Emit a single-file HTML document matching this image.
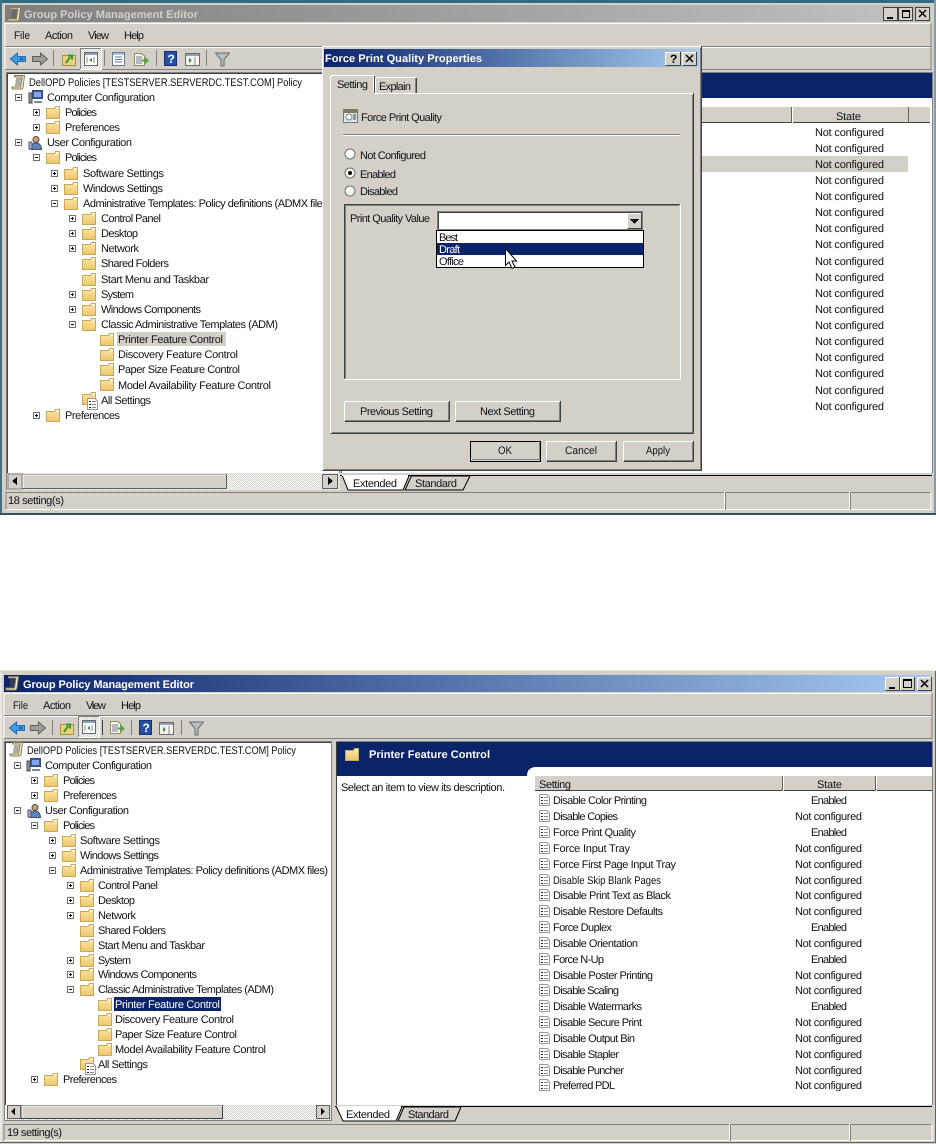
<!DOCTYPE html>
<html><head><meta charset="utf-8"><title>Group Policy Management Editor</title>
<style>
html,body{margin:0;padding:0;background:#fff;width:936px;height:1144px;overflow:hidden}
svg{display:block}
text{font-family:"Liberation Sans",sans-serif;font-size:11px;fill:#101018;text-rendering:geometricPrecision}
.b{font-weight:bold}
.w{fill:#fff}
</style></head><body>
<svg width="936" height="1144" viewBox="0 0 936 1144" xmlns="http://www.w3.org/2000/svg" shape-rendering="crispEdges">
<defs>
<linearGradient id="ina"><stop offset="0" stop-color="#7f7f7f"/><stop offset="1" stop-color="#c2c2c0"/></linearGradient>
<linearGradient id="act"><stop offset="0" stop-color="#0a246a"/><stop offset="1" stop-color="#a6caf0"/></linearGradient>
<linearGradient id="fg" x1="0" y1="0" x2="0" y2="1"><stop offset="0" stop-color="#fbe7a8"/><stop offset="1" stop-color="#eec56a"/></linearGradient>
<pattern id="dith" width="2" height="2" patternUnits="userSpaceOnUse"><rect width="2" height="2" fill="#fff"/><rect width="1" height="1" fill="#d4d0c8"/><rect x="1" y="1" width="1" height="1" fill="#d4d0c8"/></pattern>
<symbol id="f" width="14" height="13" viewBox="0 0 14 13"><path shape-rendering="auto" d="M.5 2.500H8.500L9.500 .5H13.500V12.500H.5Z" fill="url(#fg)" stroke="#c4a85c"/><path d="M10 1.500h3v1h-3z" fill="#fff"/></symbol>
<symbol id="p" width="7" height="7" viewBox="0 0 7 7"><rect x=".5" y=".5" width="6" height="6" fill="#fff" stroke="#707070"/><path d="M2 3.500h3M3.500 2v3" stroke="#000" fill="none"/></symbol>
<symbol id="m" width="7" height="7" viewBox="0 0 7 7"><rect x=".5" y=".5" width="6" height="6" fill="#fff" stroke="#707070"/><path d="M2 3.500h3" stroke="#000" fill="none"/></symbol>
<symbol id="d" width="11" height="12" viewBox="0 0 11 12"><path d="M.5 .5H8L10.500 3V11.500H.5Z" fill="#fff" stroke="#9a9a9a"/><path d="M2 3h2v1H2zM2 6h2v1H2zM2 9h2v1H2z" fill="#222"/><path d="M5 3h4v1H5zM5 6h4v1H5zM5 9h4v1H5z" fill="#8a8a9a"/></symbol>
<symbol id="scroll" width="15" height="16" viewBox="0 0 15 16"><path shape-rendering="auto" d="M3.500 1.500H13.500L12 13.500Q11.500 15 10 15H1.500Q.5 14.500 1 13H9.500L11 3H3.500Z" fill="#f6ecc8" stroke="#8a7a50"/><path d="M5 5h5M4.500 7h5M4.300 9h5M4 11h5" stroke="#555" fill="none"/></symbol>
<symbol id="pc" width="15" height="14" viewBox="0 0 15 14"><rect x="4.500" y=".5" width="10" height="8" fill="#2a5fc0" stroke="#404a60"/><rect x="6" y="2" width="7" height="5" fill="#7ea8e8"/><rect x="1" y="3" width="3" height="10" fill="#8896a8" stroke="#445"/><path d="M6 11h8v2H6z" fill="#7a8a9a"/></symbol>
<symbol id="usr" width="14" height="14" viewBox="0 0 14 14"><circle shape-rendering="auto" cx="8" cy="3.500" r="3" fill="#caa27a" stroke="#5a4634"/><path shape-rendering="auto" d="M3 13.500Q3 7 8 7T13.500 13.500Z" fill="#5d84b4" stroke="#3a5070"/><rect x="1" y="6" width="3" height="7" fill="#a0b4d0" stroke="#557"/></symbol>
<symbol id="back" width="16" height="14" viewBox="0 0 16 14"><path shape-rendering="auto" d="M.5 7L7.500 1V4.500H15.500V9.500H7.500V13Z" fill="#3c9ae0" stroke="#2468b0"/><path d="M10 6h3v2h-3z" fill="#1a5ab0"/></symbol>
<symbol id="fwd" width="16" height="14" viewBox="0 0 16 14"><path shape-rendering="auto" d="M15.500 7L8.500 1V4.500H.5V9.500H8.500V13Z" fill="#9c9c98" stroke="#5e5e5a"/></symbol>
<symbol id="up" width="14" height="14" viewBox="0 0 14 14"><rect x=".5" y="3.500" width="13" height="10" fill="#efcf78" stroke="#a98e48"/><path shape-rendering="auto" d="M4 11L8 5M6 3.500H10V7.500" stroke="#2e9a3a" stroke-width="2" fill="none"/></symbol>
<symbol id="tree" width="22" height="22" viewBox="0 0 22 22"><rect width="22" height="22" fill="url(#dith)"/><path d="M.5 21.500V.5H21.500" stroke="#808080" fill="none"/><path d="M21.500 0V21.500H0" stroke="#fff" fill="none"/><rect x="4.500" y="4.500" width="13" height="13" fill="#fff" stroke="#6a6a6a"/><rect x="5" y="5" width="12" height="2" fill="#8aa0c0"/><path d="M7 9v6M14 9v6" stroke="#888"/><path d="M12 10v4l-3-2z" fill="#2e9a3a"/></symbol>
<symbol id="help" width="13" height="15" viewBox="0 0 13 15"><rect x=".5" y=".5" width="12" height="14" fill="#2450a8" stroke="#18306c"/><text x="3.500" y="12" class="w b" style="font-size:12px">?</text></symbol>
<symbol id="view" width="15" height="13" viewBox="0 0 15 13"><rect x=".5" y=".5" width="14" height="12" fill="#f4f4f0" stroke="#6a6a6a"/><rect x="1" y="1" width="13" height="2" fill="#8aa0c0"/><path d="M10 4v8" stroke="#888"/><path d="M4 5v5l3-2.500z" fill="#2e9a3a"/></symbol>
<symbol id="filt" width="15" height="15" viewBox="0 0 15 15"><path shape-rendering="auto" d="M.5 1H14.500L9 7.500V14H6V7.500Z" fill="#b8c0c4" stroke="#606a70"/></symbol>
<symbol id="exp" width="15" height="13" viewBox="0 0 15 13"><path d="M.5 .5H7.500L10.500 3V12.500H.5Z" fill="#fbf6e0" stroke="#8a8a70"/><path d="M2 4h6M2 6h6M2 8h6M2 10h6" stroke="#77a" fill="none"/><path shape-rendering="auto" d="M8 6.500h3V4l4 3.500-4 3.500V8.500H8Z" fill="#4caa3c"/></symbol>
<symbol id="doc2" width="13" height="14" viewBox="0 0 13 14"><rect x=".5" y=".5" width="12" height="13" fill="#fff" stroke="#6a7a8a"/><rect x="1" y="1" width="11" height="2" fill="#a8c0d8"/><path d="M3 5h7M3 7.500h7M3 10h7" stroke="#5a70a8" fill="none"/></symbol>
</defs>

<!-- ================= WINDOW 1 ================= -->
<rect x="0" y="0" width="936" height="514" fill="#d4d0c8"/>
<rect x="0" y="0" width="936" height="3" fill="#2f6c84"/>
<rect x="0" y="0" width="2" height="514" fill="#3d7287"/>
<rect x="934" y="0" width="2" height="514" fill="#8b9aa0"/>
<rect x="0" y="513" width="936" height="2" fill="#2d5260"/>
<rect x="5" y="5" width="926" height="17" fill="url(#ina)"/>
<use href="#scroll" x="7" y="6"/>
<text x="24" y="18" class="b" style="fill:#d4d0c8" textLength="174">Group Policy Management Editor</text>
<g fill="#d4d0c8" stroke="#404040"><rect x="883.500" y="7.500" width="14" height="13"/><rect x="898.500" y="7.500" width="14" height="13"/><rect x="915.500" y="7.500" width="14" height="13"/></g>
<rect x="887" y="17" width="6" height="2" fill="#000"/><rect x="902.500" y="10.500" width="7" height="7" fill="none" stroke="#000"/><path d="M902 11.500h8" stroke="#000"/>
<path d="M919 10l7 7M926 10l-7 7" stroke="#000" stroke-width="1.500" shape-rendering="auto"/>
<path d="M5 46.500V23.500H931" stroke="#fff" fill="none"/><path d="M5 46.500H931V23" stroke="#808080" fill="none"/>
<text x="14" y="39" textLength="16" lengthAdjust="spacingAndGlyphs">File</text><text x="45" y="39" textLength="28">Action</text><text x="88" y="39" textLength="21">View</text><text x="124" y="39" textLength="20">Help</text>
<path d="M5 69.500V47.500H931" stroke="#fff" fill="none"/><path d="M5 69.500H931V47" stroke="#808080" fill="none"/>
<use href="#back" x="10" y="52"/><use href="#fwd" x="32" y="52"/>
<path d="M53.500 50v16M104.500 50v16M156.500 50v16M206.500 50v16" stroke="#808080"/>
<use href="#up" x="62" y="52"/><use href="#tree" x="80" y="48"/><use href="#doc2" x="112" y="52"/><use href="#exp" x="134" y="53"/><use href="#help" x="164" y="51"/><use href="#view" x="185" y="53"/><use href="#filt" x="215" y="52"/>
<!-- tree pane -->
<rect x="6.500" y="72.500" width="333" height="417" fill="#fff" stroke="#808080"/>
<path d="M7.500 473V73.500H338" stroke="#404040" fill="none"/>
<use href="#scroll" x="11" y="74"/><text x="29" y="86" textLength="273" lengthAdjust="spacingAndGlyphs">DellOPD Policies [TESTSERVER.SERVERDC.TEST.COM] Policy</text>
<use href="#m" x="15" y="94"/><use href="#pc" x="28" y="90"/><text x="47" y="101" textLength="108">Computer Configuration</text>
<use href="#p" x="33" y="109"/><use href="#f" x="46" y="106"/><text x="65" y="116" textLength="32">Policies</text>
<use href="#p" x="33" y="124"/><use href="#f" x="46" y="121"/><text x="65" y="131" textLength="55">Preferences</text>
<use href="#m" x="15" y="139"/><use href="#usr" x="28" y="136"/><text x="47" y="146" textLength="85">User Configuration</text>
<use href="#m" x="33" y="154"/><use href="#f" x="46" y="151"/><text x="65" y="161" textLength="32">Policies</text>
<use href="#p" x="51" y="170"/><use href="#f" x="64" y="167"/><text x="83" y="177" textLength="81">Software Settings</text>
<use href="#p" x="51" y="185"/><use href="#f" x="64" y="182"/><text x="83" y="192" textLength="80">Windows Settings</text>
<use href="#m" x="51" y="200"/><use href="#f" x="64" y="197"/><text x="83" y="207" textLength="248">Administrative Templates: Policy definitions (ADMX files)</text>
<use href="#p" x="69" y="215"/><use href="#f" x="82" y="212"/><text x="101" y="222" textLength="60">Control Panel</text>
<use href="#p" x="69" y="230"/><use href="#f" x="82" y="227"/><text x="101" y="237" textLength="37">Desktop</text>
<use href="#p" x="69" y="245"/><use href="#f" x="82" y="242"/><text x="101" y="252" textLength="38">Network</text>
<use href="#f" x="82" y="257"/><text x="101" y="267" textLength="68">Shared Folders</text>
<use href="#f" x="82" y="273"/><text x="101" y="283" textLength="108">Start Menu and Taskbar</text>
<use href="#p" x="69" y="291"/><use href="#f" x="82" y="288"/><text x="101" y="298" textLength="33">System</text>
<use href="#p" x="69" y="306"/><use href="#f" x="82" y="303"/><text x="101" y="313" textLength="100">Windows Components</text>
<use href="#m" x="69" y="321"/><use href="#f" x="82" y="318"/><text x="101" y="328" textLength="177">Classic Administrative Templates (ADM)</text>
<rect x="117" y="332" width="109" height="14" fill="#d4d0c8"/>
<use href="#f" x="100" y="333"/><text x="118" y="343" textLength="105">Printer Feature Control</text>
<use href="#f" x="100" y="348"/><text x="118" y="358" textLength="120">Discovery Feature Control</text>
<use href="#f" x="100" y="363"/><text x="118" y="373" textLength="122">Paper Size Feature Control</text>
<use href="#f" x="100" y="378"/><text x="118" y="389" textLength="153">Model Availability Feature Control</text>
<use href="#f" x="82" y="392"/><use href="#d" x="87" y="398"/><text x="101" y="404" textLength="50">All Settings</text>
<use href="#p" x="33" y="412"/><use href="#f" x="46" y="409"/><text x="65" y="419" textLength="55">Preferences</text>
<!-- tree scrollbar -->
<rect x="7" y="473" width="333" height="17" fill="url(#dith)"/>
<rect x="8" y="474" width="14" height="15" fill="#d4d0c8" stroke="#808080"/><path d="M17 477v8l-5-4z" fill="#000"/>
<rect x="22.500" y="474.500" width="204" height="14" fill="#d4d0c8" stroke="#606060"/><path d="M23 488V475H226" stroke="#fff" fill="none"/>
<rect x="322.500" y="474.500" width="15" height="14" fill="#d4d0c8" stroke="#606060"/><path d="M328 477v8l5-4z" fill="#000"/>
<!-- right pane -->
<rect x="341.500" y="72.500" width="591" height="403" fill="#fff" stroke="#808080"/>
<rect x="342" y="73" width="590" height="25" fill="#0a246a"/>
<rect x="700" y="107" width="230" height="16" fill="#d4d0c8"/><path d="M700 122.500H930" stroke="#404040"/><path d="M791.500 107v16M908.500 107v16" stroke="#606060"/><path d="M792.500 107v16" stroke="#fff"/>
<text x="836" y="120" textLength="25">State</text>
<rect x="700" y="156" width="208" height="16" fill="#d4d0c8"/>
<g><text x="815" y="136" textLength="69">Not configured</text><text x="815" y="152" textLength="69">Not configured</text><text x="815" y="168" textLength="69">Not configured</text><text x="815" y="184" textLength="69">Not configured</text><text x="815" y="200" textLength="69">Not configured</text><text x="815" y="216" textLength="69">Not configured</text><text x="815" y="232" textLength="69">Not configured</text><text x="815" y="248" textLength="69">Not configured</text><text x="815" y="265" textLength="69">Not configured</text><text x="815" y="281" textLength="69">Not configured</text><text x="815" y="297" textLength="69">Not configured</text><text x="815" y="313" textLength="69">Not configured</text><text x="815" y="329" textLength="69">Not configured</text><text x="815" y="345" textLength="69">Not configured</text><text x="815" y="361" textLength="69">Not configured</text><text x="815" y="377" textLength="69">Not configured</text><text x="815" y="394" textLength="69">Not configured</text><text x="815" y="410" textLength="69">Not configured</text></g>
<!-- bottom tabs -->
<rect x="340" y="473" width="593" height="18" fill="#d4d0c8"/>
<path d="M340 475.500H932" stroke="#000"/>
<path shape-rendering="auto" d="M342 475L348 490H403L409 476" fill="#fff" stroke="#000"/>
<path shape-rendering="auto" d="M405 490L411 477V476H470L463 490Z" fill="#d4d0c8" stroke="#000"/><path d="M342 475.500H408" stroke="#fff"/>
<text x="353" y="487" textLength="44">Extended</text><text x="415" y="487" textLength="42">Standard</text>
<!-- status -->
<path d="M6 509.500V492.500H931" stroke="#808080" fill="none"/><path d="M6 509.500H931V492" stroke="#fff" fill="none"/>
<path d="M724.500 492v18M849.500 492v18" stroke="#fff"/><path d="M725.500 492v18M850.500 492v18" stroke="#808080"/>
<text x="8" y="504" textLength="56">18 setting(s)</text>

<!-- dialog -->
<rect x="322" y="46" width="380" height="425" fill="#d4d0c8"/>
<path d="M322.500 471V46.500H701" stroke="#fff" fill="none"/><path d="M322.500 470.500H701.500V46" stroke="#404040" fill="none"/><path d="M324 469.500H700.500V48" stroke="#808080" fill="none"/>
<rect x="324" y="49" width="375" height="18" fill="url(#act)"/>
<text x="325" y="62" class="b w" textLength="157">Force Print Quality Properties</text>
<rect x="665" y="52" width="16" height="14" fill="#d4d0c8"/><path d="M665.500 66V52.500H681" stroke="#fff" fill="none"/><path d="M665.500 65.500H680.500V52" stroke="#404040" fill="none"/><text x="670" y="63" class="b" style="font-size:12px;fill:#000">?</text>
<rect x="682" y="52" width="15" height="14" fill="#d4d0c8"/><path d="M682.500 66V52.500H697" stroke="#fff" fill="none"/><path d="M682.500 65.500H696.500V52" stroke="#404040" fill="none"/><path d="M686 55l7 7M693 55l-7 7" stroke="#000" stroke-width="1.500" shape-rendering="auto"/>
<!-- tab panel -->
<path d="M330.500 433V93.500H693" stroke="#fff" fill="none"/><path d="M330.500 433.500H693.500V93" stroke="#404040" fill="none"/><path d="M332 432.500H692.500V95" stroke="#808080" fill="none"/>
<path d="M375.500 93V78.500L377 77.500H415.500V93" fill="#d4d0c8" stroke="#fff"/><path d="M416.500 78V93" stroke="#404040"/><path d="M415.500 78V93" stroke="#808080"/>
<path d="M330.500 94V76.500L332 75.500H373.500V94" fill="#d4d0c8" stroke="#fff"/><rect x="331" y="92" width="43" height="3" fill="#d4d0c8"/><path d="M374.500 76V93" stroke="#404040"/>
<text x="337" y="88" textLength="31">Setting</text><text x="379" y="90" textLength="32">Explain</text>
<rect x="343.500" y="109.500" width="14" height="13" fill="#dfe6ec" stroke="#6a7a80"/><rect x="344" y="110" width="13" height="3" fill="#8a7a4a"/><circle shape-rendering="auto" cx="349" cy="117" r="3" fill="#fff" stroke="#6a8aa0"/><path d="M353 115h3M353 117h3M353 119h3" stroke="#444"/>
<text x="361" y="121" textLength="81">Force Print Quality</text>
<path d="M343 134.500H680" stroke="#808080"/><path d="M343 135.500H680" stroke="#fff"/>
<g shape-rendering="auto">
<circle cx="350" cy="154" r="5" fill="#fff" stroke="#707070"/>
<circle cx="350" cy="173" r="5" fill="#fff" stroke="#707070"/><circle cx="350" cy="173" r="2" fill="#000"/>
<circle cx="350" cy="191" r="5" fill="#fff" stroke="#707070"/>
</g>
<text x="360" y="159" textLength="66">Not Configured</text><text x="360" y="178" textLength="36">Enabled</text><text x="360" y="195" textLength="38">Disabled</text>
<path d="M344.500 379V204.500H680" stroke="#404040" fill="none"/><path d="M345.500 378V205.500H679" stroke="#808080" fill="none"/><path d="M344 379.500H680.500V204" stroke="#fff" fill="none"/>
<text x="350" y="222" textLength="80">Print Quality Value</text>
<rect x="437.500" y="211.500" width="205" height="18" fill="#fff" stroke="#808080"/><path d="M438.500 229V212.500H642" stroke="#404040" fill="none"/>
<rect x="627" y="213" width="15" height="16" fill="#d4d0c8"/><path d="M627.500 229V213.500H642" stroke="#fff" fill="none"/><path d="M627.500 228.500H641.500V213" stroke="#404040" fill="none"/><path d="M630 219h9l-4.500 5z" fill="#000"/>
<rect x="436.500" y="230.500" width="207" height="37" fill="#fff" stroke="#000"/>
<rect x="437" y="243" width="206" height="12" fill="#0a246a"/>
<text x="439" y="241" textLength="19">Best</text><text x="439" y="253" class="w" textLength="21">Draft</text><text x="439" y="265" textLength="25">Office</text>
<path shape-rendering="auto" d="M505.500 248.500V265.500L509 262L512 268.500L515 267L512 261H516.500Z" fill="#fff" stroke="#000"/>
<g fill="#d4d0c8">
<rect x="344" y="401" width="106" height="21"/><rect x="455" y="401" width="106" height="21"/><rect x="470" y="441" width="71" height="21"/><rect x="546" y="441" width="71" height="21"/><rect x="623" y="441" width="71" height="21"/></g>
<path d="M344.500 422V401.500H450M455.500 422V401.500H561M546.500 462V441.500H617M623.500 462V441.500H694" stroke="#fff" fill="none"/>
<path d="M344.500 421.500H449.500V401M455.500 421.500H560.500V401M546.500 461.500H616.500V441M623.500 461.500H693.500V441" stroke="#404040" fill="none"/>
<path d="M345 420.500H448.500V402M456 420.500H559.500V402M547 460.500H615.500V442M624 460.500H692.500V442" stroke="#808080" fill="none"/>
<rect x="470.500" y="441.500" width="70" height="20" fill="none" stroke="#000"/><path d="M472 459.500H539.500V443" stroke="#808080" fill="none"/>
<text x="360" y="415" textLength="73">Previous Setting</text><text x="480" y="415" textLength="55">Next Setting</text><text x="498" y="454" textLength="14" lengthAdjust="spacingAndGlyphs">OK</text><text x="565" y="454" textLength="32" lengthAdjust="spacingAndGlyphs">Cancel</text><text x="646" y="454" textLength="24" lengthAdjust="spacingAndGlyphs">Apply</text>

<!-- ================= WINDOW 2 ================= -->
<rect x="0" y="671" width="936" height="473" fill="#d4d0c8"/>
<path d="M0 670.500H936" stroke="#e8e6e0"/><path d="M1 672V1143" stroke="#fff"/><path d="M0 1142.500H936M935.500 671V1143" stroke="#606060"/>
<rect x="4" y="675" width="928" height="17" fill="url(#act)"/>
<use href="#scroll" x="5" y="675"/>
<text x="23" y="688" class="b w" textLength="171">Group Policy Management Editor</text>
<g fill="#d4d0c8"><rect x="885" y="677" width="15" height="14"/><rect x="900" y="677" width="15" height="14"/><rect x="917" y="677" width="15" height="14"/></g>
<path d="M885.500 691V677.500H900M900.500 691V677.500H915M917.500 691V677.500H932" stroke="#fff" fill="none"/>
<path d="M885.500 690.500H899.500V677M900.500 690.500H914.500V677M917.500 690.500H931.500V677" stroke="#404040" fill="none"/>
<rect x="889" y="687" width="6" height="2" fill="#000"/><rect x="903.500" y="679.500" width="8" height="8" fill="none" stroke="#000"/><path d="M904 680.500h7" stroke="#000"/>
<path d="M921 680l7 7M928 680l-7 7" stroke="#000" stroke-width="1.500" shape-rendering="auto"/>
<path d="M4 715.500V693.500H932" stroke="#fff" fill="none"/><path d="M4 715.500H932V693" stroke="#808080" fill="none"/>
<text x="13" y="709" textLength="15" lengthAdjust="spacingAndGlyphs">File</text><text x="43" y="709" textLength="28">Action</text><text x="86" y="709" textLength="20">View</text><text x="121" y="709" textLength="20">Help</text>
<path d="M4 738.500V716.500H932" stroke="#fff" fill="none"/><path d="M4 738.500H932V716" stroke="#808080" fill="none"/>
<use href="#back" x="9" y="721"/><use href="#fwd" x="30" y="721"/>
<path d="M52.500 720v15M131.500 720v15M181.500 720v15" stroke="#808080"/><path d="M102.500 720v15" stroke="#404040"/>
<use href="#up" x="60" y="721"/><use href="#tree" x="78" y="716"/><use href="#exp" x="110" y="721"/><use href="#help" x="139" y="720"/><use href="#view" x="159" y="722"/><use href="#filt" x="189" y="721"/>
<!-- tree pane -->
<rect x="4.500" y="741.500" width="327" height="379" fill="#fff" stroke="#808080"/>
<path d="M5.500 1105V742.500H331" stroke="#404040" fill="none"/>
<use href="#scroll" x="9" y="741"/><text x="27" y="754" textLength="269" lengthAdjust="spacingAndGlyphs">DellOPD Policies [TESTSERVER.SERVERDC.TEST.COM] Policy</text>
<use href="#m" x="14" y="762"/><use href="#pc" x="26" y="758"/><text x="45" y="769" textLength="107">Computer Configuration</text>
<use href="#p" x="31" y="777"/><use href="#f" x="44" y="774"/><text x="63" y="784" textLength="32">Policies</text>
<use href="#p" x="31" y="792"/><use href="#f" x="44" y="789"/><text x="63" y="799" textLength="54">Preferences</text>
<use href="#m" x="14" y="807"/><use href="#usr" x="27" y="804"/><text x="45" y="814" textLength="84">User Configuration</text>
<use href="#m" x="31" y="822"/><use href="#f" x="44" y="819"/><text x="63" y="829" textLength="32">Policies</text>
<use href="#p" x="49" y="837"/><use href="#f" x="62" y="834"/><text x="80" y="844" textLength="80">Software Settings</text>
<use href="#p" x="49" y="852"/><use href="#f" x="62" y="849"/><text x="80" y="859" textLength="79">Windows Settings</text>
<use href="#m" x="49" y="867"/><use href="#f" x="62" y="864"/><text x="80" y="874" textLength="248">Administrative Templates: Policy definitions (ADMX files)</text>
<use href="#p" x="67" y="882"/><use href="#f" x="80" y="879"/><text x="98" y="889" textLength="60">Control Panel</text>
<use href="#p" x="67" y="897"/><use href="#f" x="80" y="894"/><text x="98" y="904" textLength="37">Desktop</text>
<use href="#p" x="67" y="912"/><use href="#f" x="80" y="909"/><text x="98" y="919" textLength="38">Network</text>
<use href="#f" x="80" y="924"/><text x="98" y="934" textLength="68">Shared Folders</text>
<use href="#f" x="80" y="939"/><text x="98" y="949" textLength="107">Start Menu and Taskbar</text>
<use href="#p" x="67" y="957"/><use href="#f" x="80" y="954"/><text x="98" y="964" textLength="33">System</text>
<use href="#p" x="67" y="971"/><use href="#f" x="80" y="968"/><text x="98" y="978" textLength="99">Windows Components</text>
<use href="#m" x="67" y="986"/><use href="#f" x="80" y="983"/><text x="98" y="993" textLength="176">Classic Administrative Templates (ADM)</text>
<rect x="114" y="997" width="107" height="14" fill="#0a246a"/>
<use href="#f" x="98" y="998"/><text x="115" y="1008" class="w" textLength="105">Printer Feature Control</text>
<use href="#f" x="98" y="1013"/><text x="115" y="1023" textLength="119">Discovery Feature Control</text>
<use href="#f" x="98" y="1028"/><text x="115" y="1038" textLength="122">Paper Size Feature Control</text>
<use href="#f" x="98" y="1043"/><text x="115" y="1053" textLength="151">Model Availability Feature Control</text>
<use href="#f" x="80" y="1057"/><use href="#d" x="85" y="1063"/><text x="98" y="1068" textLength="50">All Settings</text>
<use href="#p" x="31" y="1076"/><use href="#f" x="44" y="1073"/><text x="63" y="1083" textLength="54">Preferences</text>
<!-- scrollbar -->
<rect x="6" y="1105" width="325" height="15" fill="url(#dith)"/>
<rect x="7.500" y="1105.500" width="13" height="13" fill="#d4d0c8" stroke="#606060"/><path d="M15 1108v7l-4-3.500z" fill="#000"/>
<rect x="21.500" y="1105.500" width="201" height="13" fill="#d4d0c8" stroke="#404040"/><path d="M22 1118V1106H222" stroke="#fff" fill="none"/>
<rect x="316.500" y="1105.500" width="13" height="13" fill="#d4d0c8" stroke="#606060"/><path d="M321 1108v7l4-3.500z" fill="#000"/>
<!-- right pane -->
<rect x="336.500" y="741.500" width="596" height="364" fill="#fff" stroke="#808080"/>
<path d="M336.500 1105V742" stroke="#404040"/>
<rect x="337" y="742" width="595" height="25" fill="#0a246a"/><rect x="337" y="767" width="190" height="9" fill="#0a246a"/>
<path shape-rendering="auto" d="M527 776Q527 768 535 767L527 767Z" fill="#0a246a"/>
<use href="#f" x="345" y="748"/><text x="369" y="758" class="b w" textLength="121">Printer Feature Control</text>
<text x="341" y="791" textLength="164">Select an item to view its description.</text>
<rect x="535" y="776" width="397" height="15" fill="#d4d0c8"/><path d="M535 790.500H932" stroke="#404040"/><path d="M782.500 776v15M875.500 776v15" stroke="#606060"/><path d="M783.500 776v15M876.500 776v15" stroke="#fff"/>
<text x="539" y="788" textLength="32">Setting</text><text x="817" y="788" textLength="25">State</text>
<use href="#d" x="539" y="794"/><text x="553" y="804" textLength="94">Disable Color Printing</text><text x="811" y="804" textLength="36">Enabled</text>
<use href="#d" x="539" y="810"/><text x="553" y="820" textLength="65">Disable Copies</text><text x="795" y="820" textLength="67">Not configured</text>
<use href="#d" x="539" y="826"/><text x="553" y="836" textLength="83">Force Print Quality</text><text x="811" y="836" textLength="36">Enabled</text>
<use href="#d" x="539" y="842"/><text x="553" y="852" textLength="77">Force Input Tray</text><text x="795" y="852" textLength="67">Not configured</text>
<use href="#d" x="539" y="858"/><text x="553" y="868" textLength="123">Force First Page Input Tray</text><text x="795" y="868" textLength="67">Not configured</text>
<use href="#d" x="539" y="874"/><text x="553" y="884" textLength="108" lengthAdjust="spacingAndGlyphs">Disable Skip Blank Pages</text><text x="795" y="884" textLength="67">Not configured</text>
<use href="#d" x="539" y="889"/><text x="553" y="899" textLength="118">Disable Print Text as Black</text><text x="795" y="899" textLength="67">Not configured</text>
<use href="#d" x="539" y="905"/><text x="553" y="915" textLength="110">Disable Restore Defaults</text><text x="795" y="915" textLength="67">Not configured</text>
<use href="#d" x="539" y="921"/><text x="553" y="931" textLength="59">Force Duplex</text><text x="811" y="931" textLength="36">Enabled</text>
<use href="#d" x="539" y="937"/><text x="553" y="947" textLength="85">Disable Orientation</text><text x="795" y="947" textLength="67">Not configured</text>
<use href="#d" x="539" y="953"/><text x="553" y="963" textLength="51">Force N-Up</text><text x="811" y="963" textLength="36">Enabled</text>
<use href="#d" x="539" y="969"/><text x="553" y="979" textLength="100">Disable Poster Printing</text><text x="795" y="979" textLength="67">Not configured</text>
<use href="#d" x="539" y="984"/><text x="553" y="994" textLength="66">Disable Scaling</text><text x="795" y="994" textLength="67">Not configured</text>
<use href="#d" x="539" y="1000"/><text x="553" y="1010" textLength="89">Disable Watermarks</text><text x="811" y="1010" textLength="36">Enabled</text>
<use href="#d" x="539" y="1016"/><text x="553" y="1026" textLength="89">Disable Secure Print</text><text x="795" y="1026" textLength="67">Not configured</text>
<use href="#d" x="539" y="1032"/><text x="553" y="1042" textLength="82">Disable Output Bin</text><text x="795" y="1042" textLength="67">Not configured</text>
<use href="#d" x="539" y="1048"/><text x="553" y="1058" textLength="66">Disable Stapler</text><text x="795" y="1058" textLength="67">Not configured</text>
<use href="#d" x="539" y="1064"/><text x="553" y="1074" textLength="71">Disable Puncher</text><text x="795" y="1074" textLength="67">Not configured</text>
<use href="#d" x="539" y="1079"/><text x="553" y="1089" textLength="62">Preferred PDL</text><text x="795" y="1089" textLength="67">Not configured</text>
<!-- bottom tabs -->
<rect x="333" y="1105" width="600" height="17" fill="#d4d0c8"/>
<path d="M335 1106.500H932" stroke="#000"/>
<path shape-rendering="auto" d="M336 1106L343 1121H396L402 1107" fill="#fff" stroke="#000"/>
<path shape-rendering="auto" d="M398 1121L404 1107H461L455 1121Z" fill="#d4d0c8" stroke="#000"/><path d="M337 1106.500H401" stroke="#fff"/>
<text x="346" y="1118" textLength="44">Extended</text><text x="408" y="1118" textLength="41">Standard</text>
<!-- status -->
<path d="M4 1140.500V1124.500H932" stroke="#808080" fill="none"/><path d="M4 1140.500H932V1124" stroke="#fff" fill="none"/>
<path d="M729.500 1124v17M849.500 1124v17" stroke="#fff"/><path d="M730.500 1124v17M850.500 1124v17" stroke="#808080"/>
<text x="7" y="1136" textLength="55">19 setting(s)</text>
</svg>
</body></html>
